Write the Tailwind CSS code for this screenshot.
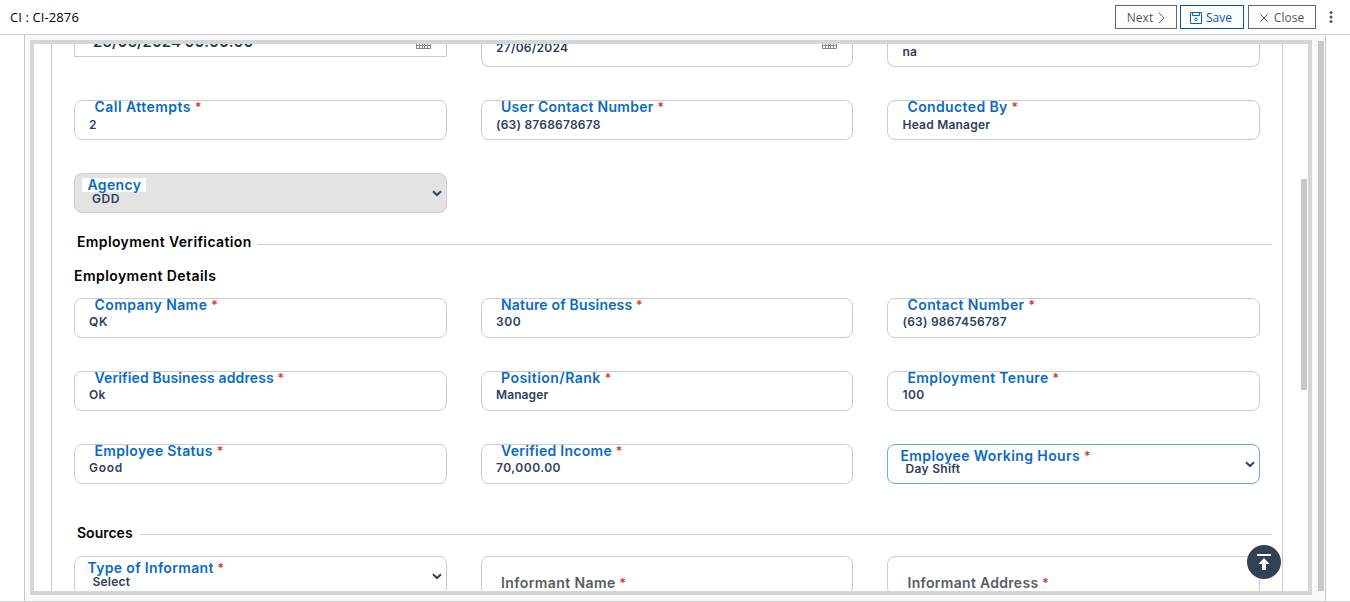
<!DOCTYPE html>
<html lang="en">
<head>
<meta charset="utf-8">
<title>CI-2876</title>
<script src="https://cdn.jsdelivr.net/npm/@tailwindcss/browser@4"></script>
</head>
<body class="h-[602px] w-[1350px] overflow-hidden bg-white font-['Inter',sans-serif] font-semibold text-[#2d3e5e]">
<div class="flex h-[602px] flex-col border-b border-[#cfcfcf]">
  <header class="flex h-[35px] shrink-0 items-center border-b border-[#cfcfcf] pl-[10px] pr-[17px] font-['Open_Sans',sans-serif] text-[12px] font-normal">
    <h1 class="flex-1 pt-px text-[13px] tracking-[.1px] text-black">CI : CI-2876</h1>
    <div class="flex items-center gap-[3px] text-[#555]">
      <button class="flex h-6 w-[62px] items-center justify-center gap-[5px] border border-[#666] pt-px">Next
        <svg class="h-3 w-[7px]" viewBox="0 0 7 12" fill="none" stroke="#666"><path d="M.7.7 6 6 .7 11.3"/></svg>
      </button>
      <button class="flex h-6 w-[64px] items-center gap-1 border border-[#00549f] pl-[9px] pt-px text-[#00549f]">
        <svg class="h-3 w-3" viewBox="0 0 12 12" fill="none" stroke="#0067b8"><path d="M.5.5h11v11H.5zM2.5.5v3h7v-3"/><circle cx="6" cy="7.5" r="1.3"/></svg>Save
      </button>
      <button class="ml-px flex h-6 w-[68px] items-center justify-center gap-[6px] border border-[#666] pt-px">
        <svg class="h-2 w-2" viewBox="0 0 8 8" fill="none" stroke="#555"><path d="m.3.3 7.4 7.4M7.7.3.3 7.7"/></svg>Close
      </button>
      <svg class="ml-[10px] h-3 w-[4px]" viewBox="0 0 4 12" fill="#555"><circle cx="2" cy="1.5" r="1.5"/><circle cx="2" cy="6" r="1.5"/><circle cx="2" cy="10.5" r="1.5"/></svg>
    </div>
  </header>

  <div class="ml-6 flex w-[1302px] flex-1 border-x border-[#c6c6c6] bg-[#f8f9fb] pl-[5px] pt-[5px]">
    <main class="flex h-[555px] w-[1282px] justify-between overflow-hidden border-4 border-[#d6d6d6] bg-white pl-[17px]">
      <div class="h-[547px] w-[1232px] shrink-0 overflow-hidden border-x border-[#ccc] pl-[22px]">
        <div class="grid h-[23px] w-[1186px] grid-cols-[373px_372px_373px] items-start gap-x-[34px]">
          <div class="flex h-[13px] items-end justify-between overflow-hidden border border-t-0 border-[#ccc] pl-[18px] pr-[15px]">
            <span class="text-[15px] leading-[24px] tracking-[-.03px] text-[#0d4237] mb-[2px]">26/06/2024 00:00:00</span>
            <svg class="mb-[7px] h-[13px] w-[15px] shrink-0" viewBox="0 0 15 13" fill="none" stroke="#888"><path d="M.5 0v12.500h14V0M0 9.500h15M0 6.500h15M3.500 0v12M6.500 0v12M8.500 0v12M11.500 0v12"/></svg>
          </div>
          <div class="flex h-[23px] items-end justify-between overflow-hidden rounded-b-lg border border-t-0 border-[#ccc] pl-[14px] pr-[15px]">
            <span class="mb-[10px] text-[12px] leading-[16px] tracking-[.25px]">27/06/2024</span>
            <svg class="mb-[17px] h-[13px] w-[15px] shrink-0" viewBox="0 0 15 13" fill="none" stroke="#888"><path d="M.5 0v12.500h14V0M0 9.500h15M0 6.500h15M3.500 0v12M6.500 0v12M8.500 0v12M11.500 0v12"/></svg>
          </div>
          <div class="flex h-[23px] items-end overflow-hidden rounded-b-lg border border-t-0 border-[#ccc] pl-[14.5px]"><span class="mb-[6px] text-[12px] leading-[16px] tracking-[.2px]">na</span></div>
        </div>

        <div class="mt-[33px] grid w-[1186px] grid-cols-[373px_372px_373px] gap-x-[34px] gap-y-[33px] text-[12px] leading-4 tracking-[.22px]">
          <div class="h-10 rounded-lg border border-[#ccc] pl-[14px]">
            <div class="h-4 pl-[5.5px] text-[14px] leading-[11px] tracking-[.46px] text-[#0a6bc2]">Call Attempts <span class="align-[1.5px] text-[12px] leading-[0] text-[#e53125]">*</span></div>
            <div>2</div>
          </div>
          <div class="h-10 rounded-lg border border-[#ccc] pl-[14px]">
            <div class="h-4 pl-[5px] text-[14px] leading-[11px] tracking-[.31px] text-[#0a6bc2]">User Contact Number <span class="align-[1.5px] text-[12px] leading-[0] text-[#e53125]">*</span></div>
            <div>(63) 8768678678</div>
          </div>
          <div class="h-10 rounded-lg border border-[#ccc] pl-[14.5px]">
            <div class="h-4 pl-[5px] text-[14px] leading-[11px] tracking-[.37px] text-[#0a6bc2]">Conducted By <span class="align-[1.5px] text-[12px] leading-[0] text-[#e53125]">*</span></div>
            <div>Head Manager</div>
          </div>
          <div class="flex h-10 items-start justify-between rounded-lg border border-[#ccc] bg-[#e3e3e3] pl-[7px] pr-1">
            <div class="pt-1"><div class="h-[14px] w-[64px] bg-white pl-[5.5px] text-[14px] leading-[14px] tracking-[.35px] text-[#0a6bc2]">Agency</div><div class="-mt-px pl-[10px] tracking-[.6px]">GDD</div></div>
            <svg class="mt-4 h-[7px] w-[10px]" viewBox="0 0 10 7" fill="none" stroke="#2d4568" stroke-width="2"><path d="m1 1.200 4 3.800 4-3.800"/></svg>
          </div>
        </div>

        <div class="mt-[20px] flex h-[18px] w-[1198px] items-center gap-[6px] pl-[3px] text-[14px] text-black"><h2 class="-mt-0.5 tracking-[.37px]">Employment Verification</h2><div class="mt-1 h-px flex-1 bg-[#ccc]"></div></div>
        <h3 class="mt-[16px] h-[18px] text-[14px] leading-[18px] tracking-[.44px] text-black">Employment Details</h3>

        <div class="mt-[13px] grid w-[1186px] grid-cols-[373px_372px_373px] gap-x-[34px] gap-y-[33px] text-[12px] leading-4 tracking-[.22px]">
          <div class="h-10 rounded-lg border border-[#ccc] pl-[14px]">
            <div class="h-[15px] pl-[5.5px] text-[14px] leading-[11px] tracking-[.4px] text-[#0a6bc2]">Company Name <span class="align-[1.5px] text-[12px] leading-[0] text-[#e53125]">*</span></div>
            <div class="tracking-[.6px]">QK</div>
          </div>
          <div class="h-10 rounded-lg border border-[#ccc] pl-[14px]">
            <div class="h-[15px] pl-[5px] text-[14px] leading-[11px] tracking-[.18px] text-[#0a6bc2]">Nature of Business <span class="align-[1.5px] text-[12px] leading-[0] text-[#e53125]">*</span></div>
            <div class="tracking-[.6px]">300</div>
          </div>
          <div class="h-10 rounded-lg border border-[#ccc] pl-[14.5px]">
            <div class="h-[15px] pl-[5px] text-[14px] leading-[11px] tracking-[.4px] text-[#0a6bc2]">Contact Number <span class="align-[1.5px] text-[12px] leading-[0] text-[#e53125]">*</span></div>
            <div>(63) 9867456787</div>
          </div>
          <div class="h-10 rounded-lg border border-[#ccc] pl-[14px]">
            <div class="h-[15px] pl-[5.5px] text-[14px] leading-[11px] tracking-[.13px] text-[#0a6bc2]">Verified Business address <span class="align-[1.5px] text-[12px] leading-[0] text-[#e53125]">*</span></div>
            <div>Ok</div>
          </div>
          <div class="h-10 rounded-lg border border-[#ccc] pl-[14px]">
            <div class="h-[15px] pl-[5px] text-[14px] leading-[11px] tracking-[.48px] text-[#0a6bc2]">Position/Rank <span class="align-[1.5px] text-[12px] leading-[0] text-[#e53125]">*</span></div>
            <div class="tracking-[.1px]">Manager</div>
          </div>
          <div class="h-10 rounded-lg border border-[#ccc] pl-[14.5px]">
            <div class="h-[15px] pl-[5px] text-[14px] leading-[11px] tracking-[.36px] text-[#0a6bc2]">Employment Tenure <span class="align-[1.5px] text-[12px] leading-[0] text-[#e53125]">*</span></div>
            <div class="tracking-[.4px]">100</div>
          </div>
          <div class="h-10 rounded-lg border border-[#ccc] pl-[14px]">
            <div class="h-[15px] pl-[5.5px] text-[14px] leading-[11px] tracking-[.34px] text-[#0a6bc2]">Employee Status <span class="align-[1.5px] text-[12px] leading-[0] text-[#e53125]">*</span></div>
            <div class="tracking-[.7px]">Good</div>
          </div>
          <div class="h-10 rounded-lg border border-[#ccc] pl-[14px]">
            <div class="h-[15px] pl-[5px] text-[14px] leading-[11px] tracking-[.28px] text-[#0a6bc2]">Verified Income <span class="align-[1.5px] text-[12px] leading-[0] text-[#e53125]">*</span></div>
            <div class="tracking-[.5px]">70,000.00</div>
          </div>
          <div class="flex h-10 items-start justify-between rounded-lg border border-[#68acdf] pl-[12.500px] pr-1">
            <div class="pt-1"><div class="h-[14px] text-[14px] leading-[14px] tracking-[.39px] text-[#0a6bc2]">Employee Working Hours <span class="align-[1.5px] text-[12px] leading-[0] text-[#e53125]">*</span></div><div class="-mt-[2px] pl-[5px] tracking-[.3px]">Day Shift</div></div>
            <svg class="mt-4 h-[7px] w-[10px]" viewBox="0 0 10 7" fill="none" stroke="#2d4568" stroke-width="2"><path d="m1 1.200 4 3.800 4-3.800"/></svg>
          </div>
        </div>

        <div class="mt-[40px] flex h-[18px] w-[1198px] items-center gap-[7px] pl-[3px] text-[14px] text-black"><h2 class="-mt-0.5">Sources</h2><div class="mt-[3px] h-px flex-1 bg-[#ccc]"></div></div>

        <div class="mt-[14px] grid w-[1186px] grid-cols-[373px_372px_373px] gap-x-[34px] text-[12px] leading-4">
          <div class="flex h-10 items-start justify-between rounded-lg border border-[#ccc] pl-[12.5px] pr-1">
            <div class="pt-1"><div class="h-[14px] text-[14px] leading-[14px] tracking-[.33px] text-[#0a6bc2]">Type of Informant <span class="align-[1.5px] text-[12px] leading-[0] text-[#e53125]">*</span></div><div class="-mt-px pl-[5px] tracking-[.2px]">Select</div></div>
            <svg class="mt-4 h-[7px] w-[10px]" viewBox="0 0 10 7" fill="none" stroke="#2d4568" stroke-width="2"><path d="m1 1.200 4 3.800 4-3.800"/></svg>
          </div>
          <div class="h-10 rounded-lg border border-[#ccc] pl-[19px] pt-[18px] text-[14px] tracking-[.4px] text-[#595d63]">Informant Name <span class="align-[1.5px] text-[12px] leading-[0] text-[#e53125]">*</span></div>
          <div class="h-10 rounded-lg border border-[#ccc] pl-[19.5px] pt-[18px] text-[14px] tracking-[.3px] text-[#595d63]">Informant Address <span class="align-[1.5px] text-[12px] leading-[0] text-[#e53125]">*</span></div>
        </div>
      </div>
      <div class="mr-px mt-[135px] h-[211px] w-[6px] bg-[#c8c8c8]"></div>
    </main>
    <div class="ml-[6px] mt-px h-[550px] w-[6px] bg-[#c8c8c8]"></div>
  </div>
</div>
<button class="absolute left-[1247px] top-[545px] flex h-[34px] w-[34px] items-center justify-center rounded-full bg-[#334155]" aria-label="Scroll to top">
  <svg class="h-[17px] w-[14px]" viewBox="0 0 14 17" fill="#fff"><path d="M0 0h14v2H0zM7 4l5.500 6H9v6H5v-6H1.500z"/></svg>
</button>
</body>
</html>
